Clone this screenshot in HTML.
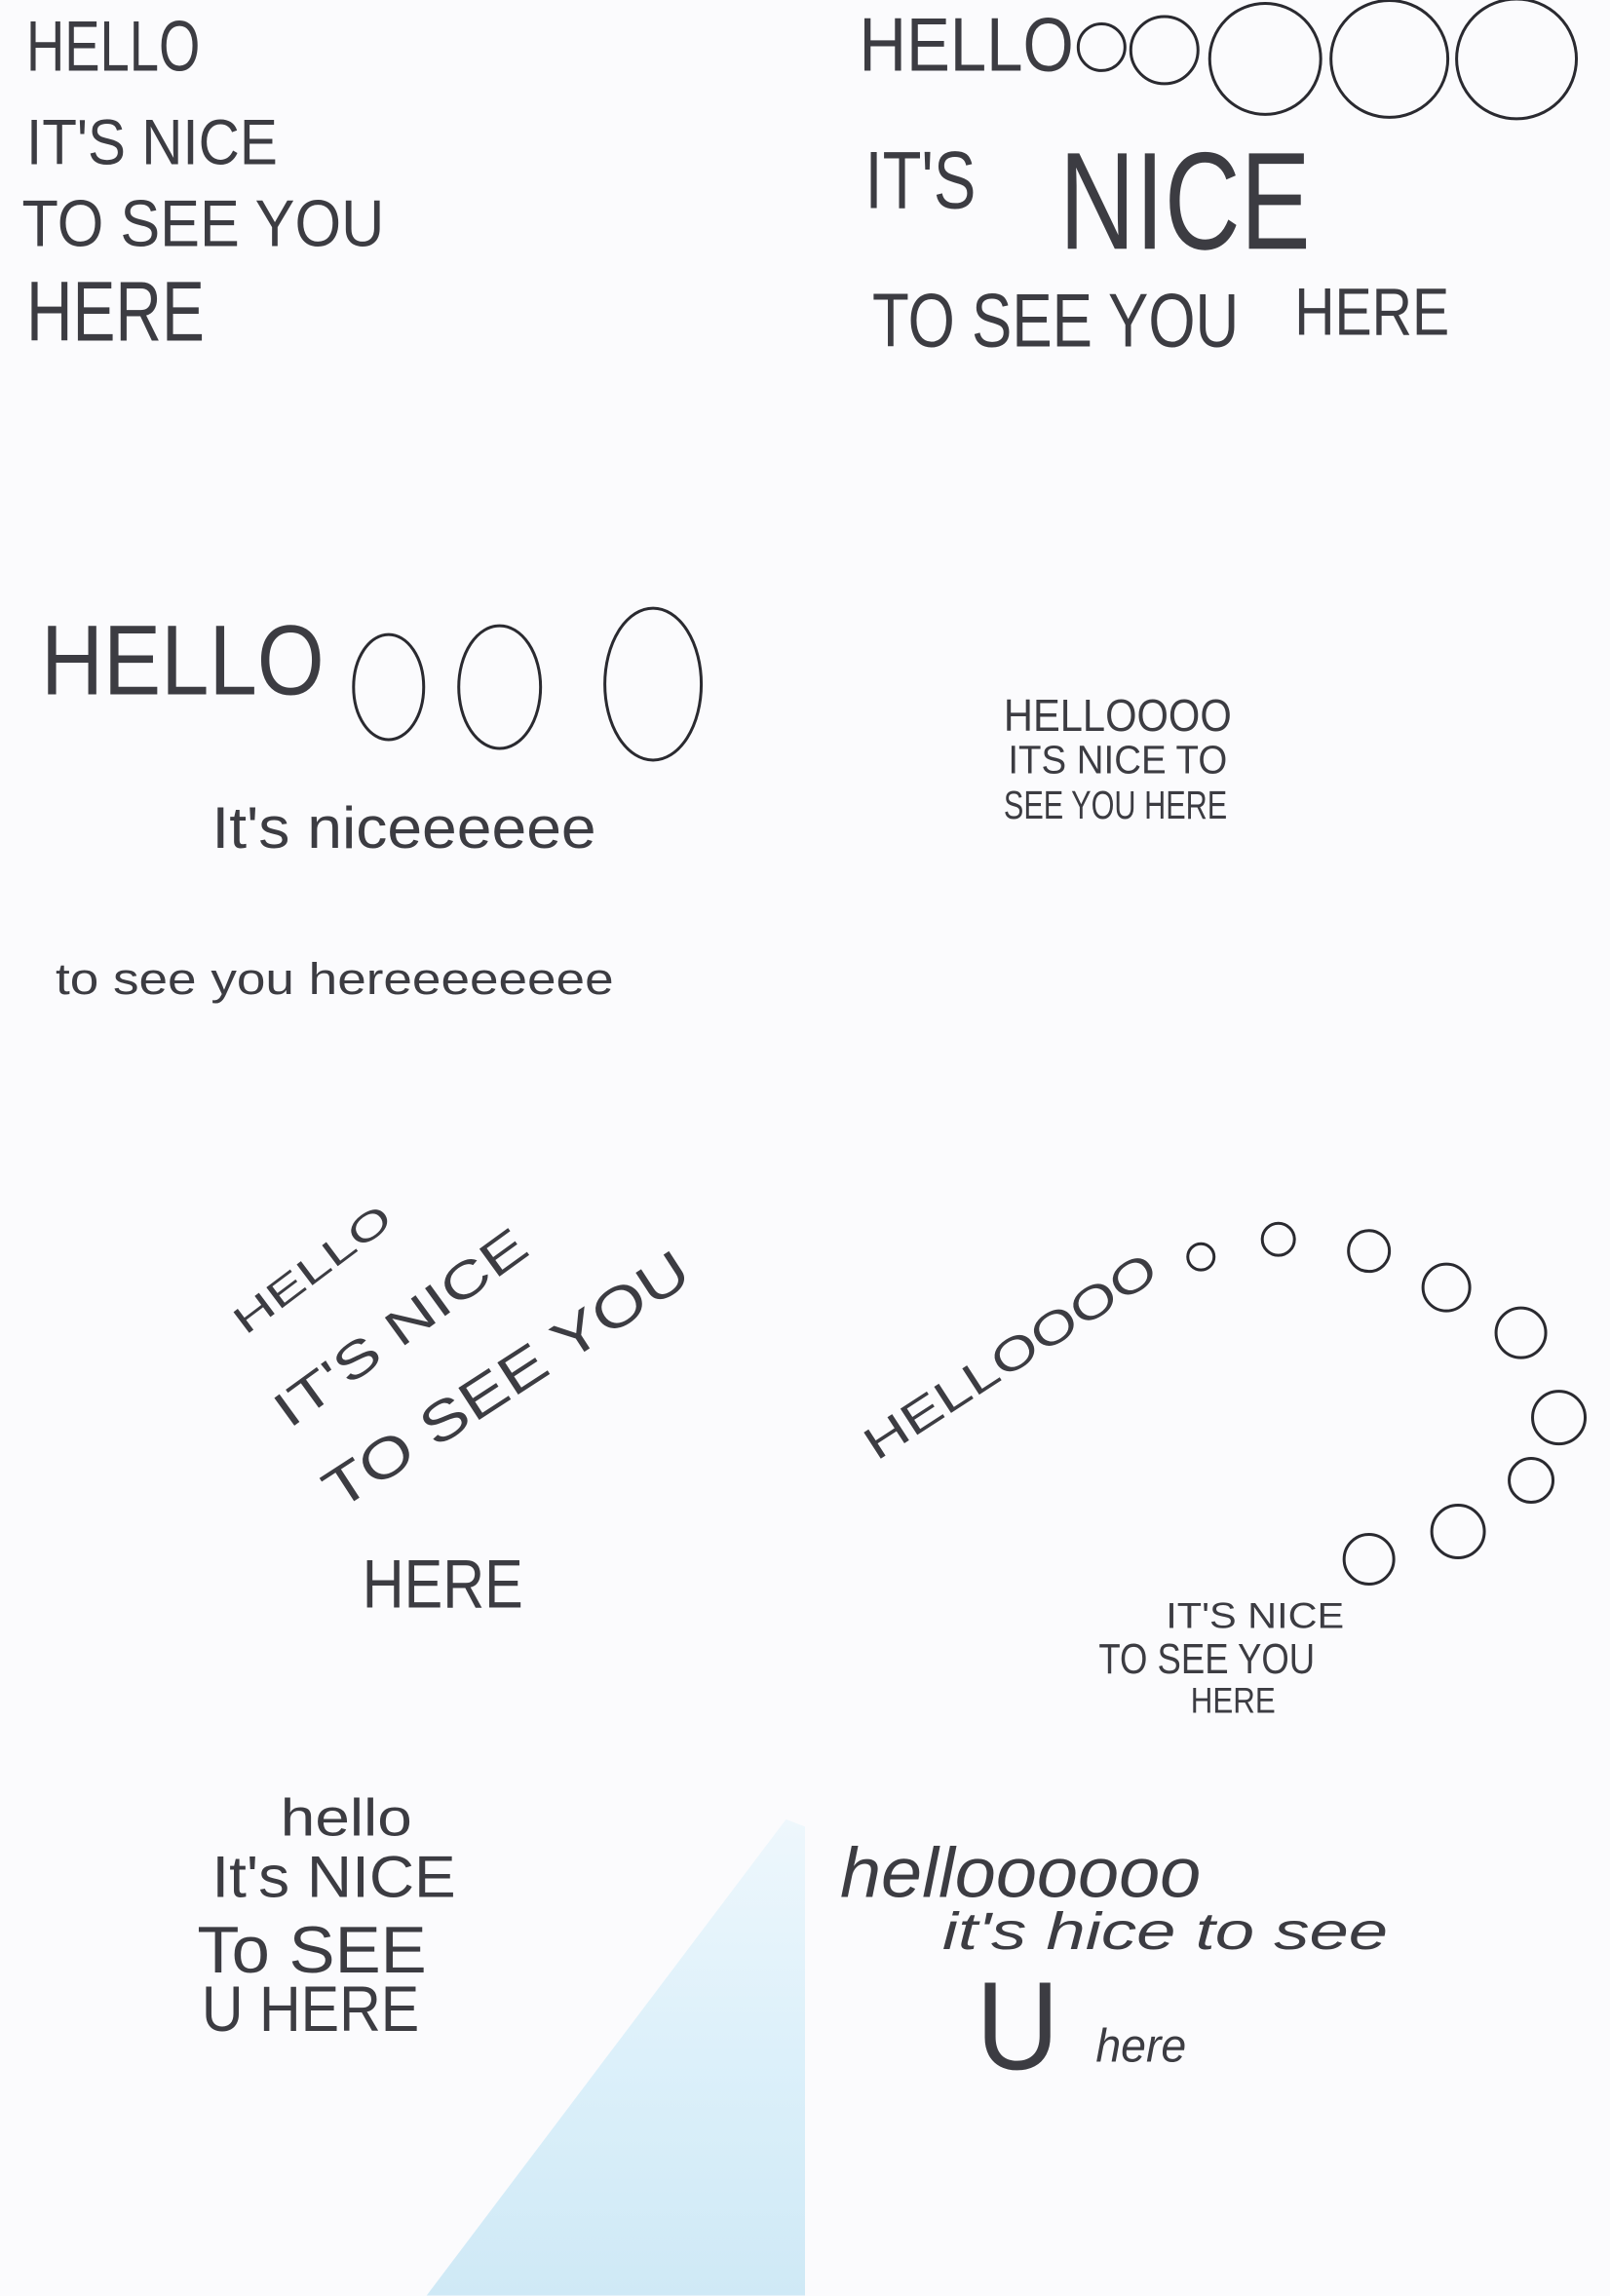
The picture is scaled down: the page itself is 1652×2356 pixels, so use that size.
<!DOCTYPE html>
<html><head><meta charset="utf-8"><style>
html,body{margin:0;padding:0;background:#fbfbfd;}
svg{display:block;}
text{font-family:"Liberation Sans",sans-serif;fill:#3c3c42;}
.i{font-style:italic;}
</style></head><body>
<svg width="1652" height="2356" viewBox="0 0 1102 1571" xmlns="http://www.w3.org/2000/svg">
<defs><linearGradient id="b" x1="0" y1="0" x2="0" y2="1"><stop offset="0" stop-color="#eef7fc"/><stop offset="0.5" stop-color="#dcf0fa"/><stop offset="1" stop-color="#cfe9f6"/></linearGradient></defs>
<rect width="1102" height="1571" fill="#fbfbfd"/>
<polygon points="538,1245 551,1250 551,1571 292,1571" fill="url(#b)"/>
<g fill="none" stroke="#2a2a30" stroke-width="2">
<circle cx="754" cy="32" r="16"/><circle cx="797" cy="34" r="23"/>
<circle cx="866" cy="40" r="38"/><circle cx="951" cy="40" r="40"/><circle cx="1038" cy="40" r="41"/>
<ellipse cx="266" cy="470" rx="24" ry="36"/><ellipse cx="342" cy="470" rx="28" ry="42"/><ellipse cx="447" cy="468" rx="33" ry="52"/>
<circle cx="822" cy="860" r="9"/><circle cx="875" cy="848" r="11"/><circle cx="937" cy="856" r="14"/>
<circle cx="990" cy="881" r="16"/><circle cx="1041" cy="912" r="17"/><circle cx="1067" cy="970" r="18"/>
<circle cx="1048" cy="1013" r="15"/><circle cx="998" cy="1048" r="18"/><circle cx="937" cy="1067" r="17"/>
</g>
<text x="18" y="48" font-size="49" textLength="119" lengthAdjust="spacingAndGlyphs">HELLO</text>
<text x="18" y="112" font-size="44" textLength="172" lengthAdjust="spacingAndGlyphs">IT'S NICE</text>
<text x="15" y="168" font-size="45" textLength="248" lengthAdjust="spacingAndGlyphs">TO SEE YOU</text>
<text x="18" y="233" font-size="58" textLength="122" lengthAdjust="spacingAndGlyphs">HERE</text>
<text x="588" y="48" font-size="52" textLength="147" lengthAdjust="spacingAndGlyphs">HELLO</text>
<text x="592" y="142" font-size="56" textLength="76" lengthAdjust="spacingAndGlyphs">IT'S</text>
<text x="725" y="170" font-size="95" textLength="172" lengthAdjust="spacingAndGlyphs">NICE</text>
<text x="597" y="237" font-size="52" textLength="251" lengthAdjust="spacingAndGlyphs">TO SEE YOU</text>
<text x="886" y="229" font-size="46" textLength="106" lengthAdjust="spacingAndGlyphs">HERE</text>
<text x="28" y="475" font-size="68" textLength="194" lengthAdjust="spacingAndGlyphs">HELLO</text>
<text x="145" y="580" font-size="40" textLength="263" lengthAdjust="spacingAndGlyphs">It's niceeeeee</text>
<text x="38" y="680" font-size="30" textLength="382" lengthAdjust="spacingAndGlyphs">to see you hereeeeeeee</text>
<text x="687" y="500" font-size="31" textLength="156" lengthAdjust="spacingAndGlyphs">HELLOOOO</text>
<text x="690" y="529" font-size="27" textLength="150" lengthAdjust="spacingAndGlyphs">ITS NICE TO</text>
<text x="687" y="560" font-size="27" textLength="153" lengthAdjust="spacingAndGlyphs">SEE YOU HERE</text>
<text x="0" y="0" font-size="26" textLength="128" lengthAdjust="spacingAndGlyphs" transform="translate(168,914) rotate(-37)">HELLO</text>
<text x="0" y="0" font-size="34" textLength="205" lengthAdjust="spacingAndGlyphs" transform="translate(198,978) rotate(-36)">IT'S NICE</text>
<text x="0" y="0" font-size="38" textLength="290" lengthAdjust="spacingAndGlyphs" transform="translate(232,1034) rotate(-33)">TO SEE YOU</text>
<text x="248" y="1100" font-size="47" textLength="110" lengthAdjust="spacingAndGlyphs">HERE</text>
<text x="0" y="0" font-size="31" textLength="232" lengthAdjust="spacingAndGlyphs" transform="translate(600,1000) rotate(-33)">HELLOOOO</text>
<text x="798" y="1114" font-size="25" textLength="122" lengthAdjust="spacingAndGlyphs">IT'S NICE</text>
<text x="752" y="1145" font-size="29" textLength="148" lengthAdjust="spacingAndGlyphs">TO SEE YOU</text>
<text x="815" y="1172" font-size="25" textLength="58" lengthAdjust="spacingAndGlyphs">HERE</text>
<text x="192" y="1256" font-size="36" textLength="90" lengthAdjust="spacingAndGlyphs">hello</text>
<text x="145" y="1298" font-size="40" textLength="167" lengthAdjust="spacingAndGlyphs">It's NICE</text>
<text x="135" y="1350" font-size="45" textLength="157" lengthAdjust="spacingAndGlyphs">To SEE</text>
<text x="138" y="1390" font-size="44" textLength="149" lengthAdjust="spacingAndGlyphs">U HERE</text>
<text class="i" x="575" y="1298" font-size="48" textLength="247" lengthAdjust="spacingAndGlyphs">helloooooo</text>
<text class="i" x="645" y="1334" font-size="36" textLength="305" lengthAdjust="spacingAndGlyphs">it's hice to see</text>
<text x="668" y="1416" font-size="86" textLength="57" lengthAdjust="spacingAndGlyphs">U</text>
<text class="i" x="750" y="1411" font-size="32" textLength="62" lengthAdjust="spacingAndGlyphs">here</text>
</svg>
</body></html>
